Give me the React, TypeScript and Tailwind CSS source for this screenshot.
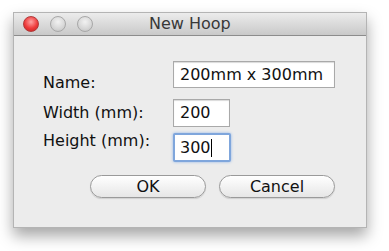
export default function App() {
  const font = { fontFamily: '"DejaVu Sans", "Liberation Sans", sans-serif' }

  return (
    <main className="w-[389px] h-[251px] bg-white pt-[12px] pl-[13px]" style={font}>
      <div className="w-[354px] h-[216px] flex flex-col border border-[#b4b4b4] shadow-[0_8px_14px_rgba(0,0,0,0.35)] bg-[#ececec]">
        <div className="h-[23px] shrink-0 flex items-center relative bg-gradient-to-b from-[#ececec] to-[#c9c9c9] border-b border-[#8c8c8c]">
          <div className="flex items-center gap-[11px] pl-[9px]">
            <span className="w-[16px] h-[16px] rounded-full border border-[#b03a3a] bg-[radial-gradient(circle_at_50%_35%,#ffa3a3_0%,#ee3b3b_55%,#c41e1e_100%)]" />
            <span className="w-[16px] h-[16px] rounded-full border border-[#a8a8a8] bg-[radial-gradient(circle_at_50%_35%,#f2f2f2_0%,#d6d6d6_60%,#bdbdbd_100%)]" />
            <span className="w-[16px] h-[16px] rounded-full border border-[#a8a8a8] bg-[radial-gradient(circle_at_50%_35%,#f2f2f2_0%,#d6d6d6_60%,#bdbdbd_100%)]" />
          </div>
          <span className="absolute left-[135px] top-[1px] text-[16px] leading-[20px] text-[#383838]">New Hoop</span>
        </div>

        <div className="flex-1 flex flex-col">
          <div className="flex">
            <div className="flex flex-col pl-[29px] pt-[37px] w-[159px] text-[16px] leading-[19px] text-[#111]">
              <span>Name:</span>
              <span className="mt-[11px]">Width (mm):</span>
              <span className="mt-[9px]">Height (mm):</span>
            </div>
            <div className="flex flex-col pt-[25px] text-[16px] text-[#111]">
              <div className="w-[162px] h-[27px] bg-white border border-[#a9a9a9] shadow-[inset_0_1px_1px_rgba(0,0,0,0.15)] pl-[6px] leading-[25px]">200mm x 300mm</div>
              <div className="mt-[11px] w-[57px] h-[28px] bg-white border border-[#a9a9a9] shadow-[inset_0_1px_1px_rgba(0,0,0,0.15)] pl-[6px] leading-[26px]">200</div>
              <div className="mt-[6px] w-[58px] h-[29px] bg-white border-2 border-[#7fa6dc] rounded-[2px] shadow-[0_0_3px_#8fb4e8] pl-[5px] leading-[25px] flex items-center">
                <span>300</span>
                <span className="w-[1.5px] h-[18px] bg-black" />
              </div>
            </div>
          </div>

          <div className="flex gap-[13px] pl-[76px] mt-[13px]">
            <button className="w-[116px] h-[23px] rounded-full border border-[#9a9a9a] bg-gradient-to-b from-white to-[#e6e6e6] text-[16px] leading-[21px] text-[#111] shadow-[0_1px_1px_rgba(0,0,0,0.12)]">OK</button>
            <button className="w-[116px] h-[23px] rounded-full border border-[#9a9a9a] bg-gradient-to-b from-white to-[#e6e6e6] text-[16px] leading-[21px] text-[#111] shadow-[0_1px_1px_rgba(0,0,0,0.12)]">Cancel</button>
          </div>
        </div>
      </div>
    </main>
  )
}
